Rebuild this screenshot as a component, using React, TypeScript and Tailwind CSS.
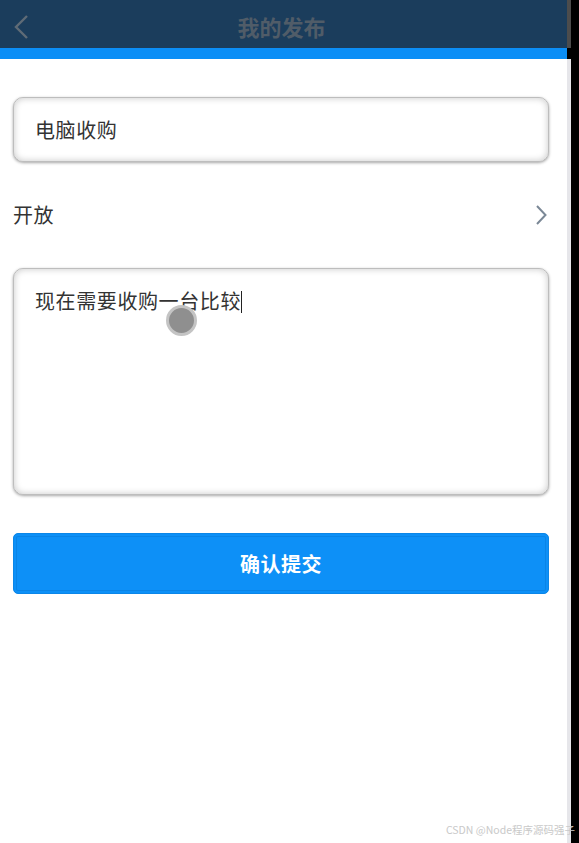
import React from 'react';

const font = { fontFamily: '"Noto Sans CJK SC", "Noto Sans", sans-serif' };

const fieldBox =
  'w-full rounded-[10px] border border-[#bdbdbd] bg-white shadow-[inset_0_0_7px_rgba(0,0,0,0.22),0_1px_3px_rgba(0,0,0,0.35)]';

const App: React.FC = () => {
  return (
    <div className="relative flex w-[579px] h-[843px] bg-black overflow-hidden" style={font}>
      {/* page */}
      <div className="flex w-[567px] flex-col bg-white">
        <header className="relative flex h-[48px] items-center justify-center bg-[#1b3d5c]">
          <svg className="absolute left-[13px] top-[14px]" width="18" height="26" viewBox="0 0 18 26">
            <path d="M14 2 L3 13 L14 24" fill="none" stroke="#5f6b76" strokeWidth="2.4" />
          </svg>
          <h1 className="mt-[5px] ml-[-4px] text-[22px] font-bold text-[#505c68]">我的发布</h1>
        </header>
        <div className="h-[11px] bg-[#0b8ef6]" />

        <div className="flex flex-col px-[13px] pt-[38px] pr-[18px]">
          <div className={`${fieldBox} flex h-[65px] items-center px-[21px]`}>
            <span className="text-[20px] tracking-[0.6px] text-[#333]">电脑收购</span>
          </div>

          <div className="mt-[34px] flex h-[38px] items-center justify-between pr-[2px]">
            <span className="text-[20px] tracking-[0.6px] text-[#333]">开放</span>
            <svg width="12" height="20" viewBox="0 0 12 20">
              <path d="M2 1 L10.5 10 L2 19" fill="none" stroke="#7b8896" strokeWidth="2" />
            </svg>
          </div>

          <div className={`${fieldBox} relative mt-[34px] h-[227px] px-[21px] pt-[18px]`}>
            <span className="text-[20px] leading-[26px] tracking-[0.6px] text-[#333]">现在需要收购一台比较</span>
            <span className="inline-block h-[22px] w-[1px] translate-y-[4px] bg-[#222]" />
            <span className="absolute left-[152px] top-[36px] h-[31px] w-[31px] rounded-full border-[3px] border-[#c4c4c4] bg-[#8f8f8f]" />
          </div>

          <button className="mt-[38px] flex h-[61px] w-full items-center justify-center rounded-[5px] border border-[#0b86e8] bg-[#0d90f7] shadow-[inset_0_0_0_2px_#0d90f7,inset_0_0_0_3px_#0a84e6]">
            <span className="text-[20px] font-bold tracking-[0.5px] text-white">确认提交</span>
          </button>
        </div>
      </div>

      {/* scrollbar edge */}
      <div className="flex w-[4px] flex-col">
        <div className="h-[48px] bg-[#4c4c4c]" />
        <div className="h-[11px] bg-black" />
        <div className="flex-1 bg-[#e6e6ea]" />
      </div>

      <span className="absolute bottom-[5px] right-[4px] text-[10.5px] text-[#c9c9c9]">CSDN @Node程序源码强子</span>
    </div>
  );
};

export default App;
